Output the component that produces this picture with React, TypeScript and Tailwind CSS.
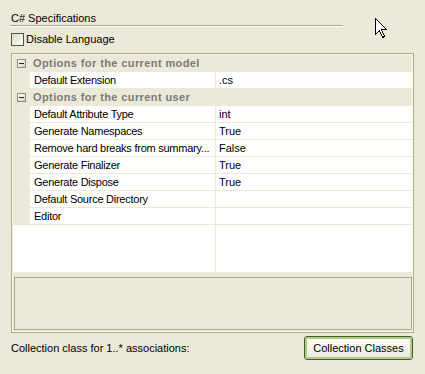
import React from "react";

type Row = [string, string];

const groups: { title: string; rows: Row[] }[] = [
  { title: "Options for the current model", rows: [["Default Extension", ".cs"]] },
  {
    title: "Options for the current user",
    rows: [
      ["Default Attribute Type", "int"],
      ["Generate Namespaces", "True"],
      ["Remove hard breaks from summary...", "False"],
      ["Generate Finalizer", "True"],
      ["Generate Dispose", "True"],
      ["Default Source Directory", ""],
      ["Editor", ""],
    ],
  },
];

function MinusBox() {
  return (
    <div className="w-[9px] h-[9px] border border-[#8c8f7c] bg-gradient-to-br from-white to-[#d6d3c4] flex items-center justify-center">
      <div className="w-[5px] h-px bg-[#222]" />
    </div>
  );
}

function Cursor() {
  return (
    <svg className="absolute left-[375px] top-[18px]" width="13" height="22" viewBox="0 0 13 22">
      <path
        d="M0.5 0.5 L0.5 16.5 L4.5 12.5 L7.5 19.5 L9.5 18.5 L6.5 11.5 L11.5 11.5 Z"
        fill="white"
        stroke="black"
        strokeWidth="1"
        shapeRendering="crispEdges"
      />
    </svg>
  );
}

export default function App() {
  return (
    <div
      className="relative w-[425px] h-[374px] bg-[#ece9d8] text-[11px] text-black overflow-hidden"
      style={{ fontFamily: '"Liberation Sans", Arial, sans-serif' }}
    >
      <Cursor />
      <div className="pt-[12px] pl-[11px] h-[13px] leading-[13px] box-content">C# Specifications</div>
      <div className="ml-[10px] w-[333px] h-px bg-[#aca899]" />
      <div className="ml-[10px] w-[333px] h-px bg-white" />
      <div className="mt-[6px] ml-[11px] flex items-center h-[13px]">
        <div className="w-[13px] h-[13px] border border-[#4f5a3c] bg-gradient-to-br from-[#dad8cc] to-white" />
        <span className="ml-[2px] leading-[13px]">Disable Language</span>
      </div>

      <div className="mt-[7px] ml-[11px] w-[403px] h-[280px] border border-[#a3b784]">
        <div className="h-full border border-[#f7f6f0] flex flex-col">
          <div className="h-[217px] bg-white flex flex-col">
            {groups.map((g) => (
              <React.Fragment key={g.title}>
                <div className="h-[17px] bg-[#ece9d8] flex items-center">
                  <div className="ml-[4px] w-[9px]">
                    <MinusBox />
                  </div>
                  <span className="ml-[7px] font-bold text-[#7b7b7b] tracking-[0.4px]">{g.title}</span>
                </div>
                {g.rows.map(([k, v]) => (
                  <div key={k} className="h-[17px] flex">
                    <div className="w-[17px] bg-[#ece9d8]" />
                    <div className="w-[186px] border-r border-b border-[#ece9d8] pl-[4px] leading-[16px] whitespace-nowrap overflow-hidden tracking-[-0.25px]">
                      {k}
                    </div>
                    <div className="flex-1 border-b border-[#ece9d8] pl-[3px] leading-[16px]">{v}</div>
                  </div>
                ))}
              </React.Fragment>
            ))}
            <div className="flex-1 flex">
              <div className="w-[203px] border-r border-[#ece9d8]" />
            </div>
          </div>
          <div className="mt-[5px] ml-px mr-0 h-[53px] border border-[#aca899] bg-[#ece9d8]" />
        </div>
      </div>

      <div className="mt-[3px] ml-[11px] w-[402px] flex items-center justify-between">
        <span className="leading-[13px]">Collection class for 1..* associations:</span>
        <button className="w-[109px] h-[24px] rounded-[3px] border border-[#37622c] p-0">
          <div className="w-full h-full rounded-[2px] border-2 border-[#b3c98a] bg-gradient-to-b from-[#fdfdf7] to-[#ecebdf] flex items-center justify-center leading-[13px]">
            Collection Classes
          </div>
        </button>
      </div>
    </div>
  );
}
